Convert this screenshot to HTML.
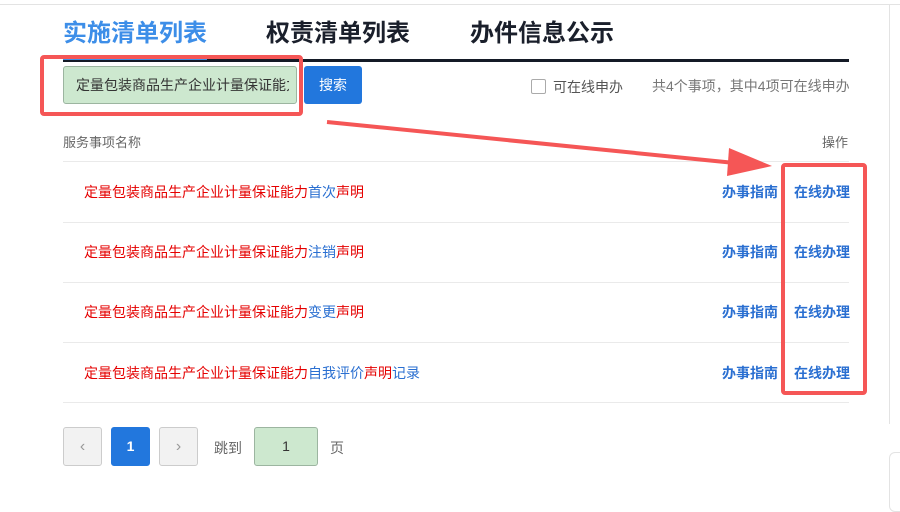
<!DOCTYPE html><html><head><meta charset="utf-8"><style>
*{margin:0;padding:0;box-sizing:border-box}
body{width:900px;height:503px;background:#fff;position:relative;overflow:hidden;font-family:"Liberation Sans","Noto Sans CJK SC",sans-serif}
.a{position:absolute;white-space:nowrap}
.tab{font-size:24px;font-weight:bold;color:#1a1f2b;top:13px}
.row{font-size:14px;left:84px;color:#e50000}
.row b{font-weight:normal;color:#2a6fd1}
.act{font-size:14px;font-weight:bold;color:#2a6fd1}
.line{position:absolute;left:63px;width:786px;height:1px;background:#eaeaea}
.pb{position:absolute;top:427px;width:39px;height:39px;border:1px solid #ccc;border-radius:3px;background:#f2f2f2;color:#999;font-size:16px;text-align:center;line-height:37px}
</style></head><body>
<div style="position:absolute;left:0;top:4px;width:900px;height:1px;background:#e3e3e3"></div>
<div style="position:absolute;left:889px;top:4px;width:1px;height:420px;background:#e3e3e3"></div>
<div style="position:absolute;left:889px;top:452px;width:20px;height:60px;border:1px solid #e3e3e3;border-radius:6px"></div>
<div class="a tab" style="left:63px;color:#3d8ee8">实施清单列表</div>
<div class="a tab" style="left:266px">权责清单列表</div>
<div class="a tab" style="left:470px">办件信息公示</div>
<div style="position:absolute;left:63px;top:59px;width:786px;height:3px;background:#141a26"></div>
<div style="position:absolute;left:63px;top:57px;width:144px;height:3px;background:#3d8ee8"></div>
<div class="a" style="left:63px;top:66px;width:234px;height:38px;background:#cde8cf;border:1px solid #9cb5a0;border-radius:3px;font-size:14px;color:#333;line-height:36px;padding-left:12px;overflow:hidden"><span style="display:inline-block;width:213px;overflow:hidden;vertical-align:top">定量包装商品生产企业计量保证能力</span></div>
<div class="a" style="left:304px;top:66px;width:58px;height:38px;background:#2277dd;border-radius:3px;color:#fff;font-size:14px;line-height:38px;text-align:center">搜索</div>
<div class="a" style="left:531px;top:79px;width:15px;height:15px;border:1px solid #aaa;border-radius:2px"></div>
<div class="a" style="left:553px;top:77px;font-size:14px;color:#555">可在线申办</div>
<div class="a" style="left:652px;top:76px;width:197px;overflow:hidden;font-size:14px;color:#777">共4个事项，其中4项可在线申办</div>
<div class="a" style="left:63px;top:132px;font-size:13px;color:#666">服务事项名称</div>
<div class="a" style="left:822px;top:132px;font-size:13px;color:#666">操作</div>
<div class="line" style="top:161px"></div><div class="line" style="top:222px"></div><div class="line" style="top:282px"></div><div class="line" style="top:342px"></div><div class="line" style="top:402px"></div>
<div class="a row" style="top:182px">定量包装商品生产企业计量保证能力<b>首次</b>声明</div>
<div class="a row" style="top:242px">定量包装商品生产企业计量保证能力<b>注销</b>声明</div>
<div class="a row" style="top:302px">定量包装商品生产企业计量保证能力<b>变更</b>声明</div>
<div class="a row" style="top:363px">定量包装商品生产企业计量保证能力<b>自我评价</b>声明<b>记录</b></div>
<div class="a act" style="left:722px;top:182px">办事指南</div><div class="a act" style="left:794px;top:182px">在线办理</div>
<div class="a act" style="left:722px;top:242px">办事指南</div><div class="a act" style="left:794px;top:242px">在线办理</div>
<div class="a act" style="left:722px;top:302px">办事指南</div><div class="a act" style="left:794px;top:302px">在线办理</div>
<div class="a act" style="left:722px;top:363px">办事指南</div><div class="a act" style="left:794px;top:363px">在线办理</div>
<div class="pb" style="left:63px">‹</div>
<div class="pb" style="left:111px;background:#2277dd;border-color:#2277dd;color:#fff;font-size:14px;font-weight:bold">1</div>
<div class="pb" style="left:159px">›</div>
<div class="a" style="left:214px;top:438px;font-size:14px;color:#666">跳到</div>
<div class="pb" style="left:254px;width:64px;background:#cde8cf;border-color:#9cb5a0;color:#333;font-size:14px">1</div>
<div class="a" style="left:330px;top:438px;font-size:14px;color:#666">页</div>
<svg style="position:absolute;left:0;top:0" width="900" height="503">
<rect x="42" y="57" width="259" height="57" rx="2" fill="none" stroke="#f55656" stroke-width="4"/>
<rect x="783" y="165" width="82" height="228" rx="2" fill="none" stroke="#f55656" stroke-width="4"/>
<line x1="327" y1="122" x2="735" y2="163" stroke="#f55656" stroke-width="4"/>
<polygon points="729,148 772,166 727,176" fill="#f55656"/>
</svg>
</body></html>
